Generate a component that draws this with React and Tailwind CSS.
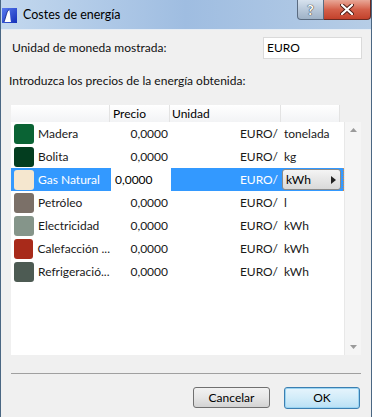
import React from 'react'

const rows = [
  { name: 'Madera', color: '#0a6334', unit: 'tonelada' },
  { name: 'Bolita', color: '#033d1f', unit: 'kg' },
  { name: 'Gas Natural', color: '#f5e7cf', unit: 'kWh', selected: true },
  { name: 'Petróleo', color: '#7b7068', unit: 'l' },
  { name: 'Electricidad', color: '#85958a', unit: 'kWh' },
  { name: 'Calefacción ...', color: '#a82a1a', unit: 'kWh' },
  { name: 'Refrigeració...', color: '#4d5b53', unit: 'kWh' },
]

const TitleIcon = () => (
  <svg width="15" height="15" viewBox="0 0 15 15">
    <defs>
      <linearGradient id="ti" x1="0" y1="0" x2="1" y2="1">
        <stop offset="0" stopColor="#5a7cf0" />
        <stop offset="1" stopColor="#1430b8" />
      </linearGradient>
    </defs>
    <rect x="0" y="0" width="15" height="15" fill="url(#ti)" />
    <path d="M2 14 C4 9 5 2 7 2 C8 2 8 8 9 14 Z" fill="#ffffff" />
    <path d="M2 14 C4 9 5 2 7 2" fill="none" stroke="#0b1f80" strokeWidth="0.8" />
  </svg>
)

const Row = ({ r }) => {
  const sel = r.selected
  return (
    <div className={`flex h-[23px] items-center ${sel ? 'bg-[#3399ff] text-white' : 'text-[#1a1a1a]'}`}>
      <div className="flex w-[99px] items-center">
        <div className="ml-[3px] h-[20px] w-[20px] rounded-[3px]" style={{ background: r.color }} />
        <span className="ml-[4px] whitespace-nowrap">{r.name}</span>
      </div>
      {sel ? (
        <div className="ml-[1px] flex h-[23px] w-[60px] items-center bg-white pl-[4px] text-black">0,0000</div>
      ) : (
        <div className="w-[60px] pr-[2px] text-right">0,0000</div>
      )}
      <div className={`pr-[3px] text-right ${sel ? 'w-[110px]' : 'w-[111px]'}`}>EURO/</div>
      {sel ? (
        <div className="flex h-[23px] w-[63px] items-center border-r border-dotted border-[#e08a3a]">
          <div className="ml-[1px] flex h-[21px] w-[59px] items-center justify-between rounded-[3px] border border-[#8a8a8a] bg-gradient-to-b from-[#f4f4f4] to-[#d9d9d9] pl-[3px] pr-[4px] text-black">
            <span>kWh</span>
            <svg width="5" height="8" viewBox="0 0 5 8"><path d="M0 0 L5 4 L0 8 Z" fill="#222" /></svg>
          </div>
        </div>
      ) : (
        <div className="w-[63px] whitespace-nowrap pl-[3px]">{r.unit}</div>
      )}
    </div>
  )
}

export default function App() {
  return (
    <div
      className="flex h-[417px] w-[372px] flex-col overflow-hidden border-x border-[#4a6783] bg-gradient-to-r from-[#c3d8ee] via-[#9fbde1] to-[#b6cde6] text-[12px]"
      style={{ fontFamily: 'Lato, "Noto Sans", sans-serif' }}
    >
      {/* title bar */}
      <div className="relative flex h-[29px] items-center">
        <div className="ml-[1px] mt-[2px]"><TitleIcon /></div>
        <span className="ml-[6px] mt-[1px] text-[12.5px] text-black">Costes de energía</span>
        <div className="absolute right-[0px] top-0 flex h-[20px]">
          <div className="flex w-[27px] items-center justify-center rounded-bl-[4px] border border-t-0 border-[#5a6b80] bg-gradient-to-b from-[#d7e2ee] via-[#b9c9da] to-[#9fb2c7] text-[14px] font-bold text-white" style={{ textShadow: '0 0 1px #222, 0 0 1px #222' }}>?</div>
          <div className="flex w-[47px] items-center justify-center rounded-br-[4px] border border-l-0 border-t-0 border-[#6b2a22] bg-gradient-to-b from-[#e8a797] via-[#d4604a] to-[#c2412b]">
            <svg width="14" height="11" viewBox="0 0 14 11">
              <path d="M2 1 L12 10 M12 1 L2 10" stroke="#4a1a14" strokeWidth="4" strokeLinecap="round" />
              <path d="M2 1 L12 10 M12 1 L2 10" stroke="#ffffff" strokeWidth="2.2" strokeLinecap="round" />
            </svg>
          </div>
        </div>
      </div>

      {/* client */}
      <div className="flex flex-1 flex-col border-t border-[#e6edf5] bg-[#f0f0f0] text-[#111]">
        <div className="mt-[7px] flex h-[22px] items-center">
          <span className="ml-[11px]">Unidad de moneda mostrada:</span>
          <div className="ml-auto mr-[9px] flex h-[22px] w-[99px] items-center border border-[#dadada] bg-white pl-[3px] text-black">EURO</div>
        </div>

        <div className="ml-[8px] mt-[13px] flex h-[18px] items-center">Introduzca los precios de la energía obtenida:</div>

        <div className="ml-[10px] mt-[15px] flex h-[17px] w-[329px] bg-gradient-to-b from-white to-[#f2f3f5] text-black">
          <div className="w-[99px] border-r border-[#e3e3e3]" />
          <div className="w-[60px] border-r border-[#e3e3e3] pl-[3px] leading-[17px]">Precio</div>
          <div className="w-[111px] border-r border-[#e3e3e3] pl-[2px] leading-[17px]">Unidad</div>
          <div className="w-[59px] border-r border-[#e3e3e3]" />
        </div>

        <div className="ml-[10px] flex h-[233px]">
          <div className="w-[333px] bg-white">
            {rows.map((r) => (
              <Row key={r.name} r={r} />
            ))}
          </div>
          <div className="flex w-[17px] flex-col items-center justify-between border-l border-[#e8e8e8] bg-[#f5f5f5] py-[6px]">
            <svg width="7" height="4" viewBox="0 0 7 4"><path d="M0 4 L3.5 0 L7 4 Z" fill="#9a9a9a" /></svg>
            <svg width="7" height="4" viewBox="0 0 7 4"><path d="M0 0 L3.5 4 L7 0 Z" fill="#9a9a9a" /></svg>
          </div>
        </div>

        <div className="ml-[10px] mt-[18px] h-[1px] w-[350px] bg-[#a0a0a0]" />

        <div className="mt-[13px] flex justify-end gap-[14px] pr-[11px]">
          <button className="h-[21px] w-[77px] rounded-[3px] border border-[#707070] bg-gradient-to-b from-[#f2f2f2] via-[#e6e6e6] to-[#d3d3d3] text-black">Cancelar</button>
          <button className="h-[22px] w-[76px] rounded-[3px] border border-[#3c7fb1] bg-gradient-to-b from-[#e6f4fc] via-[#d2ecf9] to-[#b9e0f5] text-black shadow-[inset_0_0_0_1px_#9ad4f2]">OK</button>
        </div>
      </div>
    </div>
  )
}
